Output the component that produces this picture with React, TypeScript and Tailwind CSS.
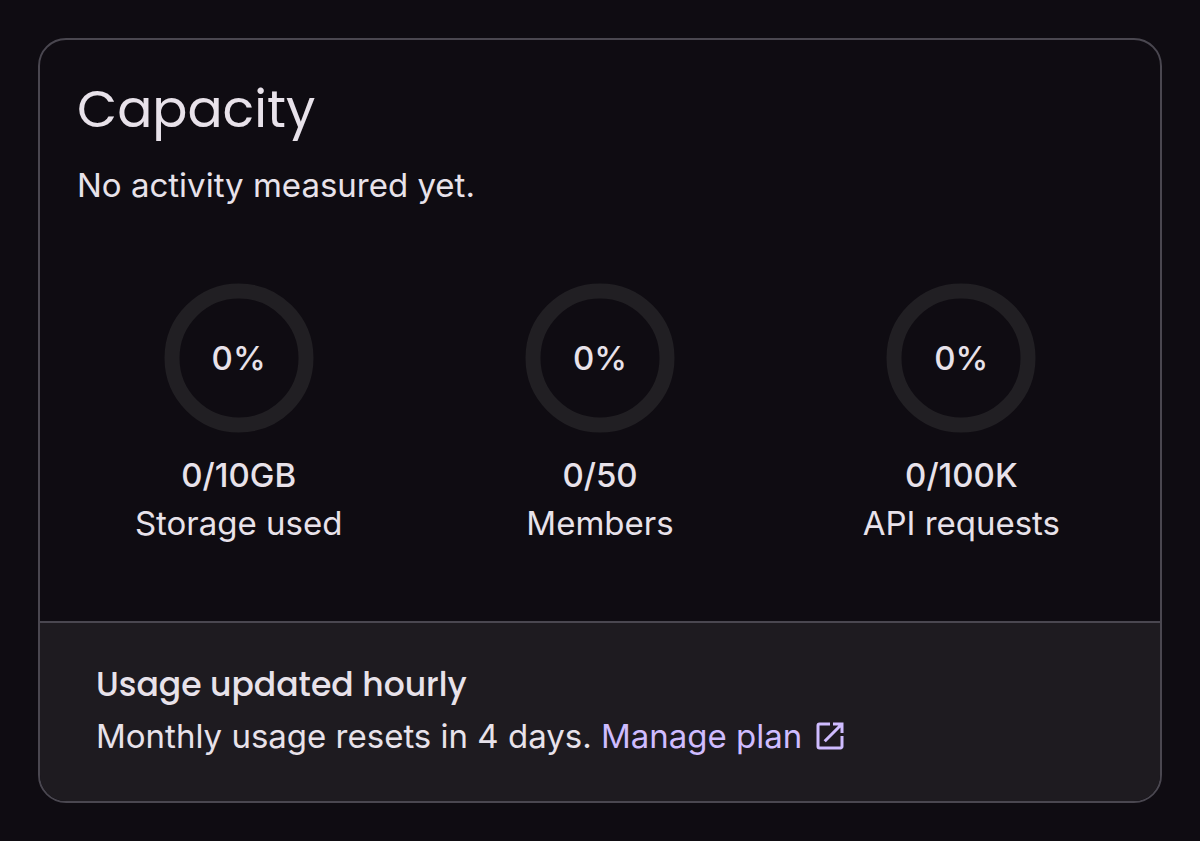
import { MdOpenInNew } from "react-icons/md";

interface Meter {
  label: string;
  usage: string;
  percent: number;
}

const meters: Meter[] = [
  { label: "Storage used", usage: "0/10GB", percent: 0 },
  { label: "Members", usage: "0/50", percent: 0 },
  { label: "API requests", usage: "0/100K", percent: 0 },
];

const RADIUS = 67;
const CIRCUMFERENCE = 2 * Math.PI * RADIUS;

function UsageRing({ percent }: { percent: number }) {
  return (
    <div className="relative size-[150px]">
      <svg viewBox="0 0 150 150" className="size-full -rotate-90" aria-hidden="true">
        <circle cx="75" cy="75" r={RADIUS} fill="none" strokeWidth="15" className="stroke-[#211f23]" />
        {percent > 0 && (
          <circle
            cx="75"
            cy="75"
            r={RADIUS}
            fill="none"
            strokeWidth="15"
            strokeDasharray={`${(percent / 100) * CIRCUMFERENCE} ${CIRCUMFERENCE}`}
            className="stroke-[#cfbcff]"
          />
        )}
      </svg>
      <span className="absolute inset-0 flex items-center justify-center font-medium">
        {percent}%
      </span>
    </div>
  );
}

export default function App() {
  return (
    <main className="min-h-screen bg-[#0f0c12] p-[38px] font-['Inter',sans-serif] text-[33px] leading-[48px] text-[#e8e2ea]">
      <section className="overflow-hidden rounded-[28px] border-2 border-[#4a4750]">
        {/* Title and meters */}
        <div className="px-[18px] pt-[35px] pb-[74px]">
          <div className="px-[18px] pl-[19px]">
            <h1 className="font-['Poppins','Inter',sans-serif] text-[52px] leading-[68px]">
              Capacity
            </h1>
            <p className="mt-[18px]">No activity measured yet.</p>
          </div>

          <ul className="mt-[74px] grid grid-cols-3">
            {meters.map((meter) => (
              <li key={meter.label} className="flex flex-col items-center">
                <UsageRing percent={meter.percent} />
                <p className="mt-[18px] font-medium">{meter.usage}</p>
                <p>{meter.label}</p>
              </li>
            ))}
          </ul>
        </div>

        {/* Footer note */}
        <footer className="border-t-2 border-[#4a4750] bg-[#1e1b20] px-14 pt-[38px] pb-[41px]">
          <h2 className="mb-[3px] font-['Poppins','Inter',sans-serif] font-medium">
            Usage updated hourly
          </h2>
          <p>
            Monthly usage resets in 4 days.{" "}
            <a href="#plan" className="inline-flex items-center gap-[10px] text-[#cfbcff]">
              Manage plan
              <MdOpenInNew className="size-9" aria-hidden="true" />
            </a>
          </p>
        </footer>
      </section>
    </main>
  );
}
